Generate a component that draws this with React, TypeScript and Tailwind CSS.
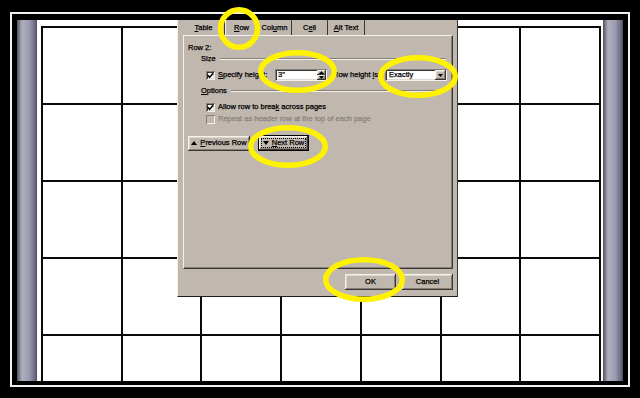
const raised =
  "bg-[#c0b8af] shadow-[inset_-1px_-1px_0_#3a3633,inset_1px_1px_0_#f4f1ec,inset_-2px_-2px_0_#857f78,inset_2px_2px_0_#ddd7d0]";
const sunken =
  "bg-white shadow-[inset_1px_1px_0_#857f78,inset_-1px_-1px_0_#f4f1ec,inset_2px_2px_0_#3a3633,inset_-2px_-2px_0_#ddd7d0]";
const gutter =
  "w-[20px] bg-[linear-gradient(to_right,#50505a,#aeafbd_25%,#9c9db2_60%,#6a6b80_90%,#4a4a55)]";

function Check({ on, disabled }: { on?: boolean; disabled?: boolean }) {
  return (
    <div
      className={`w-[9px] h-[9px] shrink-0 flex items-center justify-center ${
        disabled
          ? "bg-[#c0b8af] shadow-[inset_1px_1px_0_#857f78,inset_-1px_-1px_0_#f4f1ec]"
          : sunken
      }`}
    >
      {on && (
        <svg width="7" height="7" viewBox="0 0 7 7">
          <path d="M0.8 3.2 L2.6 5.2 L6.2 1.2" fill="none" stroke="#000" strokeWidth="1.6" />
        </svg>
      )}
    </div>
  );
}

function GroupLabel({ label, underline }: { label: string; underline?: boolean }) {
  return (
    <div className="h-[10px] flex items-center pl-[17px] pr-[6px]">
      <span>
        {underline ? (
          <>
            <u>{label[0]}</u>
            {label.slice(1)}
          </>
        ) : (
          label
        )}
      </span>
      <div className="flex-1 ml-[4px] flex flex-col">
        <div className="h-px bg-[#857f78]" />
        <div className="h-px bg-[#f4f1ec]" />
      </div>
    </div>
  );
}

const tabs = [
  { w: "w-[42px]", pre: "", u: "T", post: "able" },
  { w: "w-[33px]", pre: "", u: "R", post: "ow" },
  { w: "w-[34px]", pre: "Col", u: "u", post: "mn" },
  { w: "w-[36px]", pre: "C", u: "e", post: "ll" },
  { w: "w-[37px]", pre: "", u: "A", post: "lt Text" },
];

function Dialog() {
  return (
    <div className="absolute left-[177px] top-[20px] w-[281px] h-[277px] bg-[#c0b8af] border-l border-l-[#f4f1ec] border-r border-r-[#3a3633] border-b border-b-[#1e1c1a] pl-[5px] text-[7.5px] text-black leading-none whitespace-nowrap [-webkit-text-stroke:0.25px_currentColor]">
      {/* tabs */}
      <div className="h-[15px] flex">
        {tabs.map((t) => (
          <div
            key={t.u + t.post}
            className={`${t.w} h-full flex items-center justify-center border-r border-r-[#3a3633] ${
              t.u === "R" ? "border-l border-l-[#f4f1ec]" : ""
            }`}
          >
            <span>
              {t.pre}
              <u>{t.u}</u>
              {t.post}
            </span>
          </div>
        ))}
      </div>

      {/* panel */}
      <div className="w-[270px] h-[234px] border-l border-t border-l-[#f4f1ec] border-t-[#f4f1ec] border-r border-b border-r-[#3a3633] border-b-[#3a3633] shadow-[inset_-1px_-1px_0_#857f78] flex flex-col pt-[6px]">
        <div className="h-[12px] flex items-center pl-[4px]">Row 2:</div>
        <GroupLabel label="Size" />

        <div className="h-[12px] mt-[5px] flex items-center pl-[22px]">
          <Check on />
          <span className="w-[60px] shrink-0 pl-[3px]">
            <u>S</u>pecify height:
          </span>
          <div className={`${sunken} w-[52px] shrink-0 h-[12px] flex items-center pl-[3px]`}>
            <span className="flex-1">3"</span>
            <div className="w-[9px] h-[10px] mr-[1px] flex flex-col">
              <div className={`${raised} flex-1 flex items-center justify-center`}>
                <svg width="5" height="3" viewBox="0 0 5 3">
                  <path d="M0 3 L2.5 0 L5 3Z" fill="#000" />
                </svg>
              </div>
              <div className={`${raised} flex-1 flex items-center justify-center`}>
                <svg width="5" height="3" viewBox="0 0 5 3">
                  <path d="M0 0 L2.5 3 L5 0Z" fill="#000" />
                </svg>
              </div>
            </div>
          </div>
          <span className="w-[58px] shrink-0 pl-[6px]">
            Row height <u>i</u>s:
          </span>
          <div className={`${sunken} w-[62px] shrink-0 h-[12px] flex items-center pl-[4px]`}>
            <span className="flex-1">Exactly</span>
            <div className={`${raised} w-[11px] h-[10px] mr-[1px] flex items-center justify-center`}>
              <svg width="5" height="3" viewBox="0 0 5 3">
                <path d="M0 0 L2.5 3 L5 0Z" fill="#000" />
              </svg>
            </div>
          </div>
        </div>

        <div className="mt-[5px]">
          <GroupLabel label="Options" underline />
        </div>

        <div className="h-[10px] mt-[6px] flex items-center pl-[22px] gap-[3px]">
          <Check on />
          <span>
            Allow row to brea<u>k</u> across pages
          </span>
        </div>
        <div className="h-[10px] mt-[2px] flex items-center pl-[22px] gap-[3px] text-[#8a847c]">
          <Check disabled />
          <span>Repeat as header row at the top of each page</span>
        </div>

        <div className="h-[16px] mt-[11px] flex items-center pl-[4px] gap-[8px]">
          <div className={`${raised} w-[62px] h-[15px] flex items-center justify-center gap-[3px]`}>
            <svg width="6" height="4" viewBox="0 0 6 4">
              <path d="M0 4 L3 0 L6 4Z" fill="#000" />
            </svg>
            <span>
              <u>P</u>revious Row
            </span>
          </div>
          <div className="w-[51px] h-[16px] border border-black">
            <div className={`${raised} w-full h-full flex items-center justify-center p-[2px]`}>
              <div className="w-full h-full border border-dotted border-black flex items-center justify-center gap-[3px]">
                <svg width="6" height="4" viewBox="0 0 6 4">
                  <path d="M0 0 L3 4 L6 0Z" fill="#000" />
                </svg>
                <span>
                  <u>N</u>ext Row
                </span>
              </div>
            </div>
          </div>
        </div>
      </div>

      {/* footer buttons */}
      <div className="w-[270px] mt-[5px] flex justify-end gap-[6px]">
        <div className={`${raised} w-[51px] h-[16px] flex items-center justify-center`}>OK</div>
        <div className={`${raised} w-[51px] h-[16px] flex items-center justify-center`}>Cancel</div>
      </div>
    </div>
  );
}

export default function App() {
  return (
    <div className="relative w-[640px] h-[398px] bg-black overflow-hidden pl-[10px] pt-[12px] font-['Liberation_Sans',Arial,sans-serif]">
      {/* framed page */}
      <div className="w-[620px] h-[375px] border-2 border-[#f2f2f2] pl-[5px] pr-[5px] pt-[6px] pb-[4px]">
        <div className="h-full flex">
          <div className={gutter} />
          <div className="flex-1 bg-white pl-[4px] pt-[6px] overflow-hidden">
            <div className="w-[560px] grid grid-cols-7 border-l-2 border-t-2 border-[#0a0a0a]">
              {Array.from({ length: 35 }).map((_, i) => (
                <div key={i} className="h-[77px] border-r-2 border-b-2 border-[#0a0a0a] bg-white" />
              ))}
            </div>
          </div>
          <div className={gutter} />
        </div>
      </div>

      <Dialog />

      {/* yellow highlight rings */}
      <svg className="absolute left-0 top-0 pointer-events-none" width="640" height="398" viewBox="0 0 640 398">
        <g fill="none" stroke="#fff200" strokeWidth="5.5">
          <ellipse cx="239" cy="28.5" rx="18.5" ry="18.8" />
          <ellipse cx="297.5" cy="71.5" rx="36.8" ry="18.8" />
          <ellipse cx="418" cy="76.5" rx="37.3" ry="18.8" />
          <ellipse cx="288" cy="146.5" rx="37.3" ry="18.8" />
          <ellipse cx="364" cy="279.5" rx="38.3" ry="19.8" />
        </g>
      </svg>
    </div>
  );
}
